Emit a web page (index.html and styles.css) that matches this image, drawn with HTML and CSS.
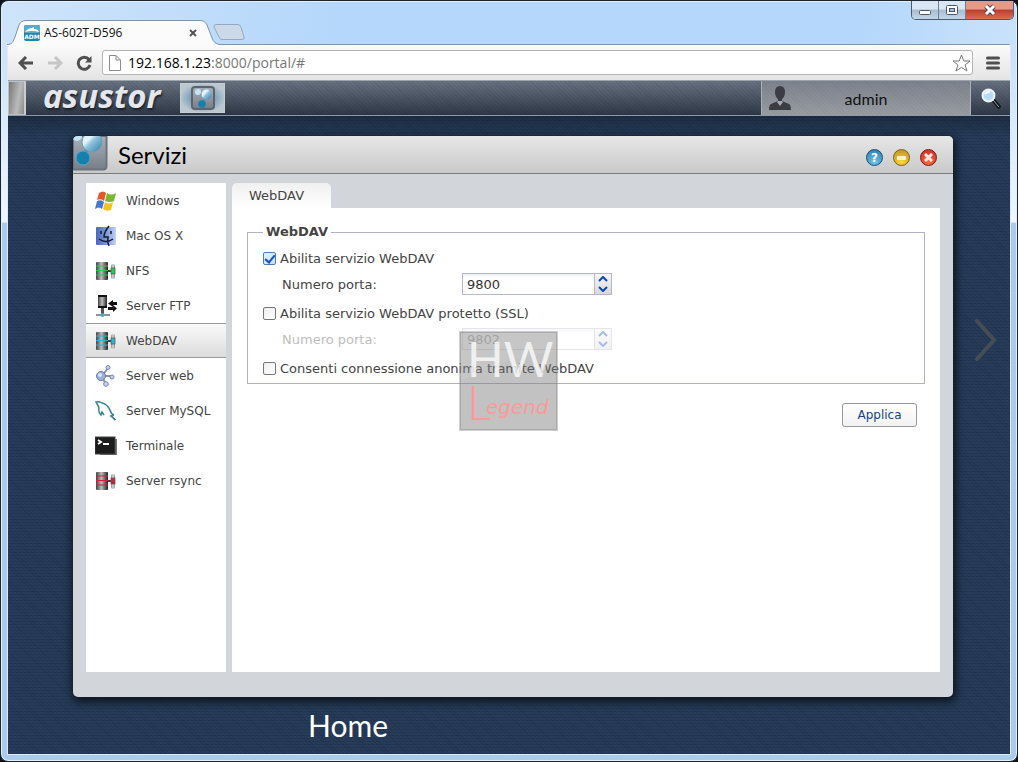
FILE: index.html
```
<!DOCTYPE html>
<html lang="it">
<head>
    <meta charset="UTF-8">
    <meta name="viewport" content="width=device-width, initial-scale=1.0">
    <title>AS-602T-D596</title>
    <link rel="stylesheet" href="styles.css">
</head>
<body>
    <!-- shared icons -->
    <svg width="0" height="0" class="defs" aria-hidden="true">
        <defs>
            <linearGradient id="metal" x1="0" x2="1">
                <stop offset="0" stop-color="#444"/>
                <stop offset=".45" stop-color="#bbb"/>
                <stop offset="1" stop-color="#222"/>
            </linearGradient>
            <linearGradient id="tile" x1="0" y1="0" x2="0" y2="1">
                <stop offset="0" stop-color="#a9b0b9"/>
                <stop offset="1" stop-color="#777e88"/>
            </linearGradient>
            <linearGradient id="ball" x1="0" y1="0" x2="1" y2="1">
                <stop offset=".35" stop-color="#e4f2f9"/>
                <stop offset=".5" stop-color="#8fc3dd"/>
                <stop offset="1" stop-color="#2a7ea8"/>
            </linearGradient>
            <linearGradient id="finder" x1="0" x2="1">
                <stop offset="0" stop-color="#4a66b4"/>
                <stop offset=".5" stop-color="#7b97d6"/>
                <stop offset="1" stop-color="#c3d2f3"/>
            </linearGradient>
            <symbol id="bubbles" viewBox="0 0 24 24">
                <rect x="1" y="1" width="22" height="22" rx="3" fill="url(#tile)" stroke="#5d646e" stroke-width="2"/>
                <path d="M7 6l4 3 5-1M14 12l-3 5" fill="none" stroke="#6f8fa5" stroke-width="2"/>
                <circle cx="7" cy="6" r="3" fill="#c4e4f6"/>
                <circle cx="15.500" cy="8.500" r="5" fill="url(#ball)"/>
                <circle cx="11" cy="18" r="3.800" fill="#1580ae"/>
            </symbol>
            <symbol id="rack" viewBox="0 0 22 22">
                <rect x="1" y="2" width="12" height="18" rx="1" fill="url(#metal)"/>
                <path d="M1 6h12M1 10.500h12M1 15h12" stroke="currentColor"/>
                <path d="M13 11h3" stroke="#444" stroke-width="2"/>
                <rect x="16" y="4" width="4" height="15" rx="2" fill="#9aa0a4"/>
                <path d="M18 4v15" stroke="#eee"/>
                <rect x="16" y="8" width="4" height="6" fill="currentColor" stroke="#555" stroke-width=".7"/>
            </symbol>
        </defs>
    </svg>

    <div class="browser">
        <div class="titlebar">
            <div class="tab">
                <svg class="tab-shape" viewBox="0 0 206 25" preserveAspectRatio="none">
                    <path d="M0 24.500C5 24.500 6 22 8 17L12 5Q14 .5 19 .5H193Q198 .5 200 5L205 18Q207 24 213 24.500V26H0z" fill="#fbfbfc"/>
                    <path d="M0 24.500C5 24.500 6 22 8 17L12 5Q14 .5 19 .5H193Q198 .5 200 5L205 18Q207 24 213 24.500" fill="none" stroke="#7d94ad"/>
                </svg>
                <svg class="favicon" viewBox="0 0 16 16">
                    <rect width="16" height="16" rx="2" fill="#2183ae"/>
                    <rect width="16" height="8" rx="2" fill="#55aacd"/>
                    <path d="M1 7Q4 3 8 3L10 2V4Q14 4 15 7Q8 5 1 7z" fill="#fff"/>
                    <text x="8" y="14" class="favicon-text">ADM</text>
                </svg>
                <span class="tab-title">AS-602T-D596</span>
                <button class="tab-close" aria-label="Chiudi scheda">
                    <svg width="8" height="8" viewBox="0 0 8 8"><path d="M1 1l6 6M7 1l-6 6" stroke="#555" stroke-width="2"/></svg>
                </button>
            </div>
            <button class="new-tab" aria-label="Nuova scheda">
                <svg width="32" height="17" viewBox="0 0 32 17"><path d="M3 .5H25Q27 .5 28 3L31 13Q32 15.500 29 15.500H9Q7 15.500 6 13L1 3Q.5 .5 3 .5z" fill="#cbd9e8" stroke="#93a9c3"/></svg>
            </button>
            <div class="win-buttons">
                <button class="win-btn" aria-label="Riduci">
                    <svg width="14" height="12" viewBox="0 0 14 12"><rect x="1.500" y="6.500" width="11" height="4" rx="1" fill="#fff" stroke="#4b5666"/></svg>
                </button>
                <button class="win-btn" aria-label="Ingrandisci">
                    <svg width="14" height="12" viewBox="0 0 14 12"><rect x="1.500" y="1.500" width="11" height="9" rx="1" fill="#fff" stroke="#4b5666"/><rect x="4.500" y="4.500" width="5" height="3" fill="#a9bdd4" stroke="#4b5666"/></svg>
                </button>
                <button class="win-btn win-close" aria-label="Chiudi">
                    <svg width="14" height="12" viewBox="0 0 14 12"><path d="M3 2l8 8M11 2l-8 8" stroke="#59435a" stroke-width="5"/><path d="M3 2l8 8M11 2l-8 8" stroke="#fff" stroke-width="3"/></svg>
                </button>
            </div>
        </div>

        <div class="page">
            <div class="toolbar">
                <button class="nav-btn" aria-label="Indietro">
                    <svg width="16" height="14" viewBox="0 0 16 14"><path d="M15 7H2M8 1L2 7l6 6" fill="none" stroke="#4f4f4f" stroke-width="3"/></svg>
                </button>
                <button class="nav-btn" aria-label="Avanti">
                    <svg width="16" height="14" viewBox="0 0 16 14"><path d="M1 7h13M8 1l6 6-6 6" fill="none" stroke="#c6c6c6" stroke-width="3"/></svg>
                </button>
                <button class="nav-btn" aria-label="Ricarica">
                    <svg width="16" height="16" viewBox="0 0 16 16"><path d="M13 4.500A6 6 0 1 0 14 10" fill="none" stroke="#4f4f4f" stroke-width="3"/><path d="M15.500 1v6.500H9z" fill="#4f4f4f"/></svg>
                </button>
                <div class="address">
                    <svg width="12" height="16" viewBox="0 0 12 16"><path d="M.5 .5H7L11.500 5V15.500H.5zM7 .5V5h4.500" fill="#fff" stroke="#8b8b8b"/></svg>
                    <span class="url"><span class="host">192.168.1.23</span>:8000/portal/#</span>
                    <svg width="19" height="18" viewBox="0 0 19 18"><path d="M9.500 1l2.300 6H18l-4.900 4L15 17l-5.500-3.600L4 17l1.900-6L1 7h6.200z" fill="#fff" stroke="#777" stroke-linejoin="round"/></svg>
                </div>
                <button class="menu-btn" aria-label="Menu">
                    <svg width="14" height="14" viewBox="0 0 14 14"><path d="M1.500 2h11M1.500 7h11M1.500 12h11" stroke="#4f4f4f" stroke-width="3" stroke-linecap="round"/></svg>
                </button>
            </div>

            <header class="adm-header">
                <button class="show-desktop" aria-label="Mostra desktop"></button>
                <span class="logo">asustor</span>
                <button class="task" aria-label="Servizi">
                    <svg width="24" height="24"><use href="#bubbles"/></svg>
                </button>
                <button class="user">
                    <svg width="22" height="24" viewBox="0 0 22 24"><path d="M6 6Q6 0 11 0T16 6Q16 11 13 13V15L20 18Q22 19 22 24H0Q0 19 2 18L9 15V13Q6 11 6 6z" fill="#3b3d40"/><path d="M8 16l3 4 3-4-1-1H9z" fill="#a5a9ae"/></svg>
                    <span class="user-name">admin</span>
                </button>
                <button class="search" aria-label="Cerca">
                    <svg width="20" height="21" viewBox="0 0 20 21"><path d="M12 12l7 8" stroke="#14181d" stroke-width="4"/><path d="M12 12l6 7" stroke="#9da3aa"/><circle cx="7.500" cy="7.500" r="6" fill="#b6dcfa" stroke="#eef5fb" stroke-width="2"/><path d="M4 6q2-3 5-2" stroke="#fff" stroke-width="2" fill="none"/></svg>
                </button>
            </header>

            <div class="desktop">
                <section class="app">
                    <div class="app-title">
                        <svg class="app-icon" viewBox="0 0 35 35">
                            <path d="M0 0H33.500V30Q33.500 33.500 30 33.500H0z" fill="url(#tile)" stroke="#6b727c" stroke-width="2"/>
                            <path d="M15 12l-4 8" stroke="#5d8ca8" stroke-width="4"/>
                            <circle cx="4" cy="0" r="5" fill="#c4e4f6"/>
                            <circle cx="19" cy="6" r="10" fill="url(#ball)" stroke="#6f9db6"/>
                            <circle cx="10" cy="22" r="7" fill="#1580ae" stroke="#5aa7c8"/>
                        </svg>
                        <h1>Servizi</h1>
                        <div class="app-controls">
                            <button class="orb help" aria-label="Aiuto">?</button>
                            <button class="orb minimize" aria-label="Riduci">
                                <svg width="9" height="4"><rect width="9" height="4" rx="1" fill="#fdf3c8"/></svg>
                            </button>
                            <button class="orb close" aria-label="Chiudi">
                                <svg width="9" height="9" viewBox="0 0 9 9"><path d="M1 1l7 7M8 1l-7 7" stroke="#ffe4e0" stroke-width="3"/></svg>
                            </button>
                        </div>
                    </div>

                    <div class="app-body">
                        <nav class="sidebar">
                            <ul>
                                <li><a href="#">
                                    <svg class="icon" viewBox="0 0 22 22"><path d="M4 3Q8 0 11 3L9 11Q6 8 2 10z" fill="#e4572a"/><path d="M12 3Q16 6 21 3L19 11Q15 13 10 11z" fill="#79b92f"/><path d="M2 11Q6 9 9 12L7 19Q4 16 0 19z" fill="#4276d8"/><path d="M10 12Q14 15 18 12L16 20Q12 22 8 19z" fill="#f3c21d"/></svg>
                                    Windows</a></li>
                                <li><a href="#">
                                    <svg class="icon" viewBox="0 0 22 22"><rect x="1" y="2" width="20" height="18" rx="1" fill="url(#finder)"/><path d="M14 1Q9 7 9 12H13Q12 17 14 21M6 6V9M16 6V9M4 14Q11 19 18 14" fill="none" stroke="#15192b" stroke-width="1.500"/></svg>
                                    Mac OS X</a></li>
                                <li><a href="#">
                                    <svg class="icon green"><use href="#rack"/></svg>
                                    NFS</a></li>
                                <li><a href="#">
                                    <svg class="icon" viewBox="0 0 22 22"><rect x="3" y="0" width="9" height="13" rx="1" fill="url(#metal)"/><path d="M3 1h9M3 12h9" stroke="#111" stroke-width="2"/><path d="M7.500 13v6" stroke="#555" stroke-width="3"/><path d="M1 20h14" stroke="#8d959b" stroke-width="2"/><circle cx="7.500" cy="20" r="2" fill="#47a9bd"/><path d="M22 10H18V12L13 8.500L18 5V7H22zM13 12H18V10L22 13.500L18 17V15H13z" fill="#111"/></svg>
                                    Server FTP</a></li>
                                <li class="selected"><a href="#">
                                    <svg class="icon cyan"><use href="#rack"/></svg>
                                    WebDAV</a></li>
                                <li><a href="#">
                                    <svg class="icon" viewBox="0 0 22 22"><path d="M7 11l6-8M7 11h10M7 11l4 9" stroke="#8592b4" stroke-width="2"/><circle cx="6" cy="11" r="4.500" fill="#9db0dc" stroke="#6c7ba6"/><circle cx="5" cy="10" r="2" fill="#dce5f7"/><circle cx="13" cy="2.500" r="2" fill="#c9d3ea" stroke="#7786af"/><circle cx="17" cy="12" r="2" fill="#c9d3ea" stroke="#7786af"/><circle cx="11" cy="19" r="2.300" fill="#c9d3ea" stroke="#7786af"/></svg>
                                    Server web</a></li>
                                <li><a href="#">
                                    <svg class="icon" viewBox="0 0 22 22"><path d="M20 20Q18 17 16 16Q18 15 19 15Q16 14 15 10Q12 4 7 3Q4 1 1 2Q3 5 4 8Q3 12 6 15L7 12L9 15" fill="none" stroke="#3c8391" stroke-width="1.500"/><path d="M17 16l4 4" stroke="#3c8391"/></svg>
                                    Server MySQL</a></li>
                                <li><a href="#">
                                    <svg class="icon" viewBox="0 0 22 22"><path d="M3 4H22V20H5z" fill="#777"/><rect x="0" y="2" width="20" height="17" fill="#1c1c1c" stroke="#444"/><path d="M3 5l3 2-3 2M8 9h6" fill="none" stroke="#fff" stroke-width="2"/></svg>
                                    Terminale</a></li>
                                <li><a href="#">
                                    <svg class="icon red"><use href="#rack"/></svg>
                                    Server rsync</a></li>
                            </ul>
                        </nav>

                        <main class="content">
                            <div class="tabs">
                                <button class="panel-tab">WebDAV</button>
                            </div>
                            <form class="panel">
                                <fieldset>
                                    <legend>WebDAV</legend>
                                    <div class="group">
                                        <div class="row">
                                            <input type="checkbox" id="webdav" checked>
                                            <label for="webdav">Abilita servizio WebDAV</label>
                                        </div>
                                        <div class="row port">
                                            <label for="port">Numero porta:</label>
                                            <div class="spinner">
                                                <input type="text" id="port" value="9800">
                                                <div class="arrows">
                                                    <button type="button" aria-label="Aumenta"><svg width="10" height="6" viewBox="0 0 10 6"><path d="M1 5l4-4 4 4" fill="none" stroke="#0b45b5" stroke-width="2"/></svg></button>
                                                    <button type="button" aria-label="Diminuisci"><svg width="10" height="6" viewBox="0 0 10 6"><path d="M1 1l4 4 4-4" fill="none" stroke="#0b45b5" stroke-width="2"/></svg></button>
                                                </div>
                                            </div>
                                        </div>
                                    </div>
                                    <div class="group">
                                        <div class="row">
                                            <input type="checkbox" id="ssl">
                                            <label for="ssl">Abilita servizio WebDAV protetto (SSL)</label>
                                        </div>
                                        <div class="row port disabled">
                                            <label for="ssl-port">Numero porta:</label>
                                            <div class="spinner">
                                                <input type="text" id="ssl-port" value="9802" disabled>
                                                <div class="arrows">
                                                    <button type="button" aria-label="Aumenta" disabled><svg width="10" height="6" viewBox="0 0 10 6"><path d="M1 5l4-4 4 4" fill="none" stroke="#0b45b5" stroke-width="2"/></svg></button>
                                                    <button type="button" aria-label="Diminuisci" disabled><svg width="10" height="6" viewBox="0 0 10 6"><path d="M1 1l4 4 4-4" fill="none" stroke="#0b45b5" stroke-width="2"/></svg></button>
                                                </div>
                                            </div>
                                        </div>
                                    </div>
                                    <div class="group">
                                        <div class="row">
                                            <input type="checkbox" id="anon">
                                            <label for="anon">Consenti connessione anonima tramite WebDAV</label>
                                        </div>
                                    </div>
                                </fieldset>
                                <div class="actions">
                                    <button type="button" class="apply">Applica</button>
                                </div>
                                <svg class="watermark" viewBox="0 0 99 100">
                                    <rect x="1" y="1" width="97" height="98" fill="#777" fill-opacity=".45" stroke="#888" stroke-opacity=".4" stroke-width="2"/>
                                    <path d="M2 2H97V20Q40 28 2 50z" fill="#fff" fill-opacity=".08"/>
                                    <text x="8" y="46" class="mark-hw">HW</text>
                                    <text x="8" y="89" class="mark-l">L</text>
                                    <text x="27" y="83" class="mark-egend">egend</text>
                                </svg>
                            </form>
                        </main>
                    </div>
                </section>

                <button class="next" aria-label="Avanti">
                    <svg width="22" height="42" viewBox="0 0 22 42"><path d="M2 2l17 19L2 40" fill="none" stroke="#474d55" stroke-width="4" stroke-linecap="round"/></svg>
                </button>
                <div class="home">Home</div>
            </div>
        </div>
    </div>
</body>
</html>
```
FILE: styles.css
```
* {
    box-sizing: border-box;
}

body {
    margin: 0;
    background-color: #10131a;
    font-family: "DejaVu Sans", sans-serif;
    font-size: 12px;
    color: #444;
}

button {
    display: flex;
    align-items: center;
    justify-content: center;
    padding: 0;
    border: none;
    background: none;
    font-family: inherit;
    cursor: pointer;
}

svg {
    flex-shrink: 0;
}

.defs {
    position: absolute;
}

/* browser window */
.browser {
    display: flex;
    flex-direction: column;
    min-height: 100vh;
    padding: 0 6px 6px;
    border: 1px solid #1c2632;
    border-radius: 8px;
    background: linear-gradient(to bottom, rgba(255, 255, 255, 0) 60px, rgba(255, 255, 255, 0.7) 221px, rgba(255, 255, 255, 0) 222px), linear-gradient(to bottom, transparent 221px, #a9cbee 222px), linear-gradient(100deg, #cfe4fa 0, #b4d7fb 30%, #b4d7fb 75%, #cbe3fb 90%, #cbe3fb 100%);
    box-shadow: inset 0 0 0 1px #e3effb;
}

.titlebar {
    display: flex;
    align-items: flex-end;
    height: 43px;
}

.tab {
    position: relative;
    display: flex;
    align-items: center;
    width: 206px;
    height: 25px;
    padding: 0 14px 0 17px;
    margin-bottom: -1px;
}

.tab-shape {
    position: absolute;
    left: 0;
    top: 0;
    width: 100%;
    height: 100%;
    overflow: visible;
}

.favicon {
    position: relative;
    width: 16px;
    height: 16px;
    margin-right: 4px;
}

.favicon-text {
    font: bold 6px "DejaVu Sans", sans-serif;
    text-anchor: middle;
    fill: #fff;
}

.tab-title {
    position: relative;
    flex: 1;
    font: 12px "Open Sans", sans-serif;
    color: #111;
}

.tab-close {
    position: relative;
    width: 12px;
    height: 12px;
}

.new-tab {
    margin: 0 0 3px 0;
}

.win-buttons {
    display: flex;
    align-self: flex-start;
    height: 19px;
    margin-left: auto;
    margin-right: -3px;
    border: 1px solid #4b5c70;
    border-top: none;
    border-radius: 0 0 5px 5px;
    overflow: hidden;
}

.win-btn {
    width: 27px;
    border-right: 1px solid #6c7f95;
    background: linear-gradient(#d9e6f4 45%, #a8bcd2 50%, #c3d6e9);
}

.win-close {
    width: 47px;
    border-right: none;
    background: linear-gradient(#e39a88 45%, #bd3d2b 50%, #d77057);
}

.page {
    flex: 1;
    display: flex;
    flex-direction: column;
    border: 1px solid #dfe9f4;
    border-top-color: #7d94ad;
    border-radius: 3px 3px 0 0;
    background-color: #233a58;
}

.toolbar {
    display: flex;
    align-items: center;
    gap: 13px;
    height: 35px;
    padding: 0 10px;
    background: linear-gradient(#fbfbfc, #e4e4e4);
}

.nav-btn {
    width: 16px;
    height: 16px;
}

.address {
    flex: 1;
    display: flex;
    align-items: center;
    gap: 7px;
    height: 25px;
    margin-left: -3px;
    padding: 0 1px 0 6px;
    border: 1px solid #b4b4b4;
    border-radius: 3px;
    background-color: #fff;
}

.url {
    flex: 1;
    font: 14px "Open Sans", sans-serif;
    color: #777;
}

.host {
    color: #000;
}

.menu-btn {
    width: 14px;
}

/* ADM top bar */
.adm-header {
    display: flex;
    align-items: center;
    height: 36px;
    border-top: 1px solid #9ba3ad;
    border-bottom: 1px solid #8b99a8;
    background: repeating-linear-gradient(45deg, rgba(0, 0, 0, 0.06) 0 1px, transparent 1px 3px), linear-gradient(#687180, #2d3745);
}

.show-desktop {
    align-self: stretch;
    width: 18px;
    border: 1px solid #bcc1c5;
    border-right: 2px solid #c8ccd0;
    background: linear-gradient(100deg, #777, #bbb 60%, #8a8a8a);
}

.logo {
    width: 137px;
    margin-left: 17px;
    padding-bottom: 4px;
    font: italic bold 33px/32px "Open Sans", sans-serif;
    color: #e4e7eb;
    text-shadow: 1px 2px 2px #1b222c;
}

.task {
    width: 45px;
    height: 30px;
    border: 1px solid #c5cdd3;
    background: radial-gradient(#6d97b4 30%, #bcc8d0 75%);
}

.user {
    align-self: stretch;
    width: 210px;
    margin-left: auto;
    padding: 0 7px;
    border-left: 1px solid #aab0b8;
    border-right: 1px solid #aab0b8;
    background: repeating-linear-gradient(45deg, rgba(0, 0, 0, 0.03) 0 1px, transparent 1px 3px), linear-gradient(#7c828c, #989ca3);
}

.user-name {
    flex: 1;
    padding-right: 22px;
    font: 16px Lato, sans-serif;
    text-align: center;
    color: #111;
}

.search {
    width: 39px;
    height: 34px;
}

/* desktop */
.desktop {
    position: relative;
    flex: 1;
    display: flex;
    flex-direction: column;
    padding: 20px 57px 10px 65px;
    background: linear-gradient(rgba(0, 0, 0, 0.25), transparent 20px), repeating-linear-gradient(0deg, rgba(0, 0, 0, 0.08) 0 1px, transparent 1px 3px), repeating-linear-gradient(45deg, rgba(0, 0, 0, 0.08) 0 1px, transparent 1px 3px), #263c5a;
}

.app {
    flex: 1;
    display: flex;
    flex-direction: column;
    border-radius: 5px;
    background-color: #d2d6db;
    box-shadow: 1px 3px 9px 2px rgba(0, 0, 0, 0.65);
    overflow: hidden;
}

.app-title {
    display: flex;
    align-items: center;
    height: 38px;
    border-bottom: 1px solid #777b79;
    background: linear-gradient(#e7e7e7, #c9c9c9);
}

.app-icon {
    align-self: flex-start;
    width: 35px;
    height: 35px;
}

h1 {
    flex: 1;
    margin: 0 0 0 10px;
    font: 24px/32px Lato, sans-serif;
    color: #000;
}

.app-controls {
    display: flex;
    gap: 10px;
    padding: 6px 16px 0 0;
}

.orb {
    width: 17px;
    height: 17px;
    border: 1px solid #555;
    border-radius: 50%;
    font-size: 12px;
    font-weight: bold;
    color: #fff;
}

.help {
    border-color: #1f4f6e;
    background: radial-gradient(circle at 50% 80%, #6cc7f2, #2877a6);
}

.minimize {
    border-color: #7d6016;
    background: radial-gradient(circle at 50% 80%, #ffd83a, #b98d1b);
}

.close {
    border-color: #7c1c16;
    background: radial-gradient(circle at 50% 80%, #ff6a3c, #c02a2c);
}

.app-body {
    flex: 1;
    display: flex;
    gap: 6px;
    padding: 9px 13px 25px;
}

.sidebar {
    width: 140px;
    background-color: #fff;
}

.sidebar ul {
    margin: 0;
    padding: 0;
    list-style: none;
}

.sidebar a {
    display: flex;
    align-items: center;
    gap: 9px;
    height: 35px;
    padding-left: 9px;
    color: #444;
    text-decoration: none;
}

.selected {
    border-top: 1px solid #999;
    border-bottom: 1px solid #999;
    background: linear-gradient(#fafafa, #dcdcdc);
}

.sidebar .selected a {
    height: 33px;
}

.icon {
    width: 22px;
    height: 22px;
}

.green {
    color: #2fc45a;
}

.cyan {
    color: #2fb5cc;
}

.red {
    color: #cf2138;
}

.content {
    flex: 1;
    display: flex;
    flex-direction: column;
}

.tabs {
    display: flex;
}

.panel-tab {
    height: 25px;
    padding: 0 27px 0 17px;
    border-radius: 5px 5px 0 0;
    background: linear-gradient(#f0f0f0, #fff);
    font-size: 13px;
    color: #444;
}

.panel {
    position: relative;
    flex: 1;
    padding: 16px 15px;
    background-color: #fff;
}

fieldset {
    margin: 0;
    padding: 5px 15px 2px;
    border: 1px solid #b3b1c6;
    font-size: 13px;
}

legend {
    padding: 0 3px;
    font-weight: bold;
    line-height: 16px;
}

.group {
    margin-bottom: 3px;
}

.group:last-child {
    margin-bottom: 0;
}

.row {
    display: flex;
    align-items: center;
    height: 26px;
}

.row input[type="checkbox"] {
    appearance: none;
    width: 13px;
    height: 13px;
    margin: 0 4px 0 0;
    border: 1px solid #777;
    border-radius: 2px;
    background: linear-gradient(135deg, #eee, #fff);
}

.row input[type="checkbox"]:checked {
    position: relative;
    border-color: #4c7db5;
    background: linear-gradient(135deg, #e8f2fb, #c5dff7);
}

/* tick */
.row input[type="checkbox"]:checked::after {
    content: "";
    position: absolute;
    left: 3px;
    top: 0;
    width: 4px;
    height: 8px;
    border: solid #1453b8;
    border-width: 0 2px 2px 0;
    transform: rotate(40deg);
}

.port {
    padding-left: 19px;
}

.port label {
    width: 180px;
}

.spinner {
    display: flex;
    width: 150px;
    height: 22px;
    border: 1px solid #b5b8c8;
}

.spinner input {
    flex: 1;
    min-width: 0;
    padding: 0 4px;
    border: none;
    background: linear-gradient(#eee, #fff 4px);
    font: 13px "DejaVu Sans", sans-serif;
    color: #333;
}

.arrows {
    display: flex;
    flex-direction: column;
    width: 17px;
    border-left: 1px solid #b5b8c8;
    background: linear-gradient(#f6f6f6, #d8d8d8);
}

.arrows button {
    flex: 1;
}

.disabled {
    opacity: 0.35;
}

.actions {
    display: flex;
    justify-content: flex-end;
    padding: 19px 8px 0;
}

.apply {
    width: 75px;
    height: 24px;
    border: 1px solid #999;
    border-radius: 3px;
    background: linear-gradient(#fff, #f2f2f2);
    font-size: 12px;
    color: #15428b;
}

.watermark {
    position: absolute;
    left: 227px;
    top: 123px;
    width: 99px;
    height: 100px;
    pointer-events: none;
}

.mark-hw {
    font: 48px Lato, sans-serif;
    fill: #fff;
    fill-opacity: 0.75;
}

.mark-l {
    font: 300 48px Lato, sans-serif;
    fill: #f99;
}

.mark-egend {
    font: italic 20px "DejaVu Sans", sans-serif;
    font-weight: 200;
    fill: #f99;
}

.next {
    position: absolute;
    right: 13px;
    top: 203px;
}

.home {
    padding: 9px 0 0 235px;
    font: 30px/38px Lato, sans-serif;
    color: #fff;
}
```
